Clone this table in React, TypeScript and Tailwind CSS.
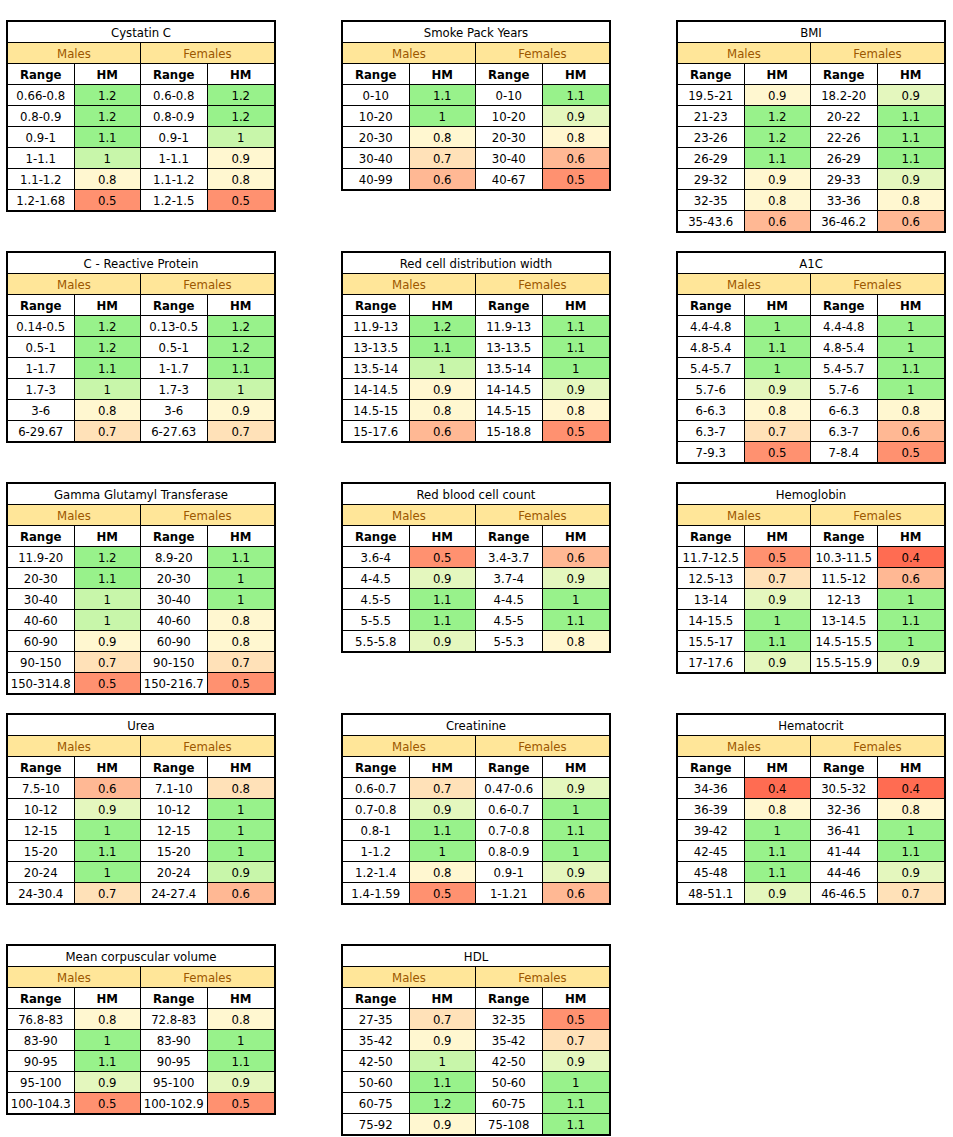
import React from "react";

type Row = [string, string, string];
type T = { title: string; m: Row[]; f: Row[] };

const C: Record<string, string> = {
  G: "bg-[#98f28b]",
  L: "bg-[#c8f6aa]",
  V: "bg-[#e4f7be]",
  Y: "bg-[#fff7d0]",
  P: "bg-[#ffe1b8]",
  O: "bg-[#ffb894]",
  S: "bg-[#ff9170]",
  R: "bg-[#ff6c52]",
};

const tables: T[] = [
  {
    title: "Cystatin C",
    m: [["0.66-0.8", "1.2", "G"], ["0.8-0.9", "1.2", "G"], ["0.9-1", "1.1", "G"], ["1-1.1", "1", "L"], ["1.1-1.2", "0.8", "Y"], ["1.2-1.68", "0.5", "S"]],
    f: [["0.6-0.8", "1.2", "G"], ["0.8-0.9", "1.2", "G"], ["0.9-1", "1", "L"], ["1-1.1", "0.9", "Y"], ["1.1-1.2", "0.8", "Y"], ["1.2-1.5", "0.5", "S"]],
  },
  {
    title: "Smoke Pack Years",
    m: [["0-10", "1.1", "G"], ["10-20", "1", "G"], ["20-30", "0.8", "Y"], ["30-40", "0.7", "P"], ["40-99", "0.6", "O"]],
    f: [["0-10", "1.1", "G"], ["10-20", "0.9", "V"], ["20-30", "0.8", "Y"], ["30-40", "0.6", "O"], ["40-67", "0.5", "S"]],
  },
  {
    title: "BMI",
    m: [["19.5-21", "0.9", "Y"], ["21-23", "1.2", "G"], ["23-26", "1.2", "G"], ["26-29", "1.1", "G"], ["29-32", "0.9", "Y"], ["32-35", "0.8", "Y"], ["35-43.6", "0.6", "O"]],
    f: [["18.2-20", "0.9", "V"], ["20-22", "1.1", "G"], ["22-26", "1.1", "G"], ["26-29", "1.1", "G"], ["29-33", "0.9", "V"], ["33-36", "0.8", "Y"], ["36-46.2", "0.6", "O"]],
  },
  {
    title: "C - Reactive Protein",
    m: [["0.14-0.5", "1.2", "G"], ["0.5-1", "1.2", "G"], ["1-1.7", "1.1", "G"], ["1.7-3", "1", "L"], ["3-6", "0.8", "Y"], ["6-29.67", "0.7", "P"]],
    f: [["0.13-0.5", "1.2", "G"], ["0.5-1", "1.2", "G"], ["1-1.7", "1.1", "G"], ["1.7-3", "1", "L"], ["3-6", "0.9", "Y"], ["6-27.63", "0.7", "P"]],
  },
  {
    title: "Red cell distribution width",
    m: [["11.9-13", "1.2", "G"], ["13-13.5", "1.1", "G"], ["13.5-14", "1", "L"], ["14-14.5", "0.9", "Y"], ["14.5-15", "0.8", "Y"], ["15-17.6", "0.6", "O"]],
    f: [["11.9-13", "1.1", "G"], ["13-13.5", "1.1", "G"], ["13.5-14", "1", "G"], ["14-14.5", "0.9", "V"], ["14.5-15", "0.8", "Y"], ["15-18.8", "0.5", "S"]],
  },
  {
    title: "A1C",
    m: [["4.4-4.8", "1", "G"], ["4.8-5.4", "1.1", "G"], ["5.4-5.7", "1", "G"], ["5.7-6", "0.9", "V"], ["6-6.3", "0.8", "Y"], ["6.3-7", "0.7", "P"], ["7-9.3", "0.5", "S"]],
    f: [["4.4-4.8", "1", "G"], ["4.8-5.4", "1", "G"], ["5.4-5.7", "1.1", "G"], ["5.7-6", "1", "G"], ["6-6.3", "0.8", "Y"], ["6.3-7", "0.6", "O"], ["7-8.4", "0.5", "S"]],
  },
  {
    title: "Gamma Glutamyl Transferase",
    m: [["11.9-20", "1.2", "G"], ["20-30", "1.1", "G"], ["30-40", "1", "L"], ["40-60", "1", "L"], ["60-90", "0.9", "Y"], ["90-150", "0.7", "P"], ["150-314.8", "0.5", "S"]],
    f: [["8.9-20", "1.1", "G"], ["20-30", "1", "G"], ["30-40", "1", "G"], ["40-60", "0.8", "Y"], ["60-90", "0.8", "Y"], ["90-150", "0.7", "P"], ["150-216.7", "0.5", "S"]],
  },
  {
    title: "Red blood cell count",
    m: [["3.6-4", "0.5", "S"], ["4-4.5", "0.9", "V"], ["4.5-5", "1.1", "G"], ["5-5.5", "1.1", "G"], ["5.5-5.8", "0.9", "V"]],
    f: [["3.4-3.7", "0.6", "O"], ["3.7-4", "0.9", "V"], ["4-4.5", "1", "G"], ["4.5-5", "1.1", "G"], ["5-5.3", "0.8", "Y"]],
  },
  {
    title: "Hemoglobin",
    m: [["11.7-12.5", "0.5", "S"], ["12.5-13", "0.7", "P"], ["13-14", "0.9", "V"], ["14-15.5", "1", "G"], ["15.5-17", "1.1", "G"], ["17-17.6", "0.9", "V"]],
    f: [["10.3-11.5", "0.4", "R"], ["11.5-12", "0.6", "O"], ["12-13", "1", "G"], ["13-14.5", "1.1", "G"], ["14.5-15.5", "1", "G"], ["15.5-15.9", "0.9", "V"]],
  },
  {
    title: "Urea",
    m: [["7.5-10", "0.6", "O"], ["10-12", "0.9", "V"], ["12-15", "1", "G"], ["15-20", "1.1", "G"], ["20-24", "1", "G"], ["24-30.4", "0.7", "P"]],
    f: [["7.1-10", "0.8", "P"], ["10-12", "1", "G"], ["12-15", "1", "G"], ["15-20", "1", "G"], ["20-24", "0.9", "L"], ["24-27.4", "0.6", "O"]],
  },
  {
    title: "Creatinine",
    m: [["0.6-0.7", "0.7", "P"], ["0.7-0.8", "0.9", "V"], ["0.8-1", "1.1", "G"], ["1-1.2", "1", "G"], ["1.2-1.4", "0.8", "Y"], ["1.4-1.59", "0.5", "S"]],
    f: [["0.47-0.6", "0.9", "V"], ["0.6-0.7", "1", "G"], ["0.7-0.8", "1.1", "G"], ["0.8-0.9", "1", "G"], ["0.9-1", "0.9", "V"], ["1-1.21", "0.6", "O"]],
  },
  {
    title: "Hematocrit",
    m: [["34-36", "0.4", "R"], ["36-39", "0.8", "Y"], ["39-42", "1", "G"], ["42-45", "1.1", "G"], ["45-48", "1.1", "G"], ["48-51.1", "0.9", "V"]],
    f: [["30.5-32", "0.4", "R"], ["32-36", "0.8", "Y"], ["36-41", "1", "G"], ["41-44", "1.1", "G"], ["44-46", "0.9", "V"], ["46-46.5", "0.7", "P"]],
  },
  {
    title: "Mean corpuscular volume",
    m: [["76.8-83", "0.8", "Y"], ["83-90", "1", "G"], ["90-95", "1.1", "G"], ["95-100", "0.9", "V"], ["100-104.3", "0.5", "S"]],
    f: [["72.8-83", "0.8", "Y"], ["83-90", "1", "G"], ["90-95", "1.1", "G"], ["95-100", "0.9", "V"], ["100-102.9", "0.5", "S"]],
  },
  {
    title: "HDL",
    m: [["27-35", "0.7", "P"], ["35-42", "0.9", "Y"], ["42-50", "1", "L"], ["50-60", "1.1", "G"], ["60-75", "1.2", "G"], ["75-92", "0.9", "Y"]],
    f: [["32-35", "0.5", "S"], ["35-42", "0.7", "P"], ["42-50", "0.9", "V"], ["50-60", "1", "G"], ["60-75", "1.1", "G"], ["75-108", "1.1", "G"]],
  },
];

function Table({ t }: { t: T }) {
  const n = t.m.length;
  return (
    <div className="w-[270px] border-2 border-black bg-white self-start">
      <div className="h-[21px] border-b border-black flex items-center justify-center">{t.title}</div>
      <div className="grid grid-cols-2 h-[21px] border-b border-black bg-[#ffe699] text-[#9c5700]">
        <div className="flex items-center justify-center border-r border-black">Males</div>
        <div className="flex items-center justify-center">Females</div>
      </div>
      <div className="grid grid-cols-4 h-[21px] border-b border-black font-bold">
        <div className="flex items-center justify-center border-r border-black">Range</div>
        <div className="flex items-center justify-center border-r border-black">HM</div>
        <div className="flex items-center justify-center border-r border-black">Range</div>
        <div className="flex items-center justify-center">HM</div>
      </div>
      {t.m.map((r, i) => {
        const f = t.f[i];
        const last = i === n - 1;
        return (
          <div key={i} className={last ? "grid grid-cols-4 h-[20px]" : "grid grid-cols-4 h-[21px] border-b border-black"}>
            <div className="flex items-center justify-center border-r border-black">{r[0]}</div>
            <div className={"flex items-center justify-center border-r border-black " + C[r[2]]}>{r[1]}</div>
            <div className="flex items-center justify-center border-r border-black">{f[0]}</div>
            <div className={"flex items-center justify-center " + C[f[2]]}>{f[1]}</div>
          </div>
        );
      })}
    </div>
  );
}

export default function App() {
  return (
    <div
      className="w-[953px] min-h-[1137px] bg-white pl-[6px] pt-[20px] text-[13px] leading-none text-black"
      style={{ fontFamily: '"DejaVu Sans Condensed", "DejaVu Sans", sans-serif' }}
    >
      <div className="grid grid-cols-[270px_270px_270px] gap-x-[65px] auto-rows-[231px]">
        {tables.map((t, i) => (
          <Table key={i} t={t} />
        ))}
      </div>
    </div>
  );
}
